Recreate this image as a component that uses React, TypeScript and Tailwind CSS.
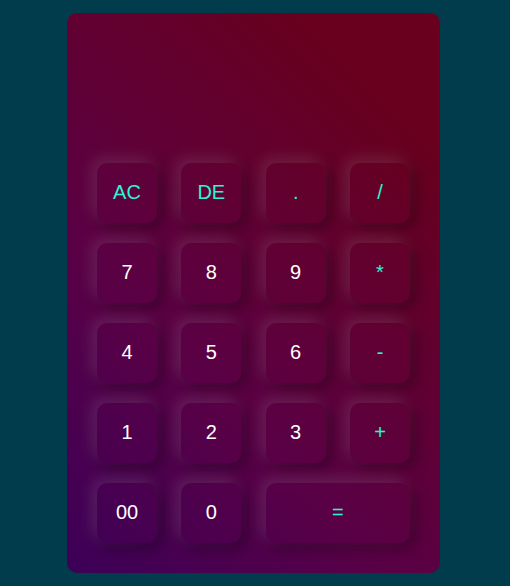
import React from 'react';

type Key = { label: string; op?: boolean; wide?: boolean };

const keys: Key[] = [
    { label: 'AC', op: true },
    { label: 'DE', op: true },
    { label: '.', op: true },
    { label: '/', op: true },
    { label: '7' },
    { label: '8' },
    { label: '9' },
    { label: '*', op: true },
    { label: '4' },
    { label: '5' },
    { label: '6' },
    { label: '-', op: true },
    { label: '1' },
    { label: '2' },
    { label: '3' },
    { label: '+', op: true },
    { label: '00' },
    { label: '0' },
    { label: '=', op: true, wide: true },
];

const App = () => {
    return (
        <div className="min-h-[586px] w-full bg-[#003c4b] flex items-center py-[13px]">
            <div
                className="ml-[67px] w-[373px] h-[560px] rounded-[10px] bg-[linear-gradient(45deg,#3c0058_0%,#5a0046_35%,#68001e_85%)] flex flex-col justify-end px-[30px] pb-[30px]"
                style={{ fontFamily: '"Liberation Sans", Arial, sans-serif' }}
            >
                <div className="grid grid-cols-4 gap-x-[24.3px] gap-y-[20px]">
                    {keys.map(k => (
                        <button
                            key={k.label}
                            className={`h-[60px] pb-[2px] rounded-[10px] bg-transparent text-[20px] flex items-center justify-center shadow-[-5px_-5px_15px_rgba(255,255,255,0.12),5px_5px_15px_rgba(0,0,0,0.35)] ${k.wide ? 'col-span-2' : ''} ${k.op ? 'text-[#2ff3d2]' : 'text-white'}`}
                        >
                            {k.label}
                        </button>
                    ))}
                </div>
            </div>
        </div>
    );
};

export default App;
